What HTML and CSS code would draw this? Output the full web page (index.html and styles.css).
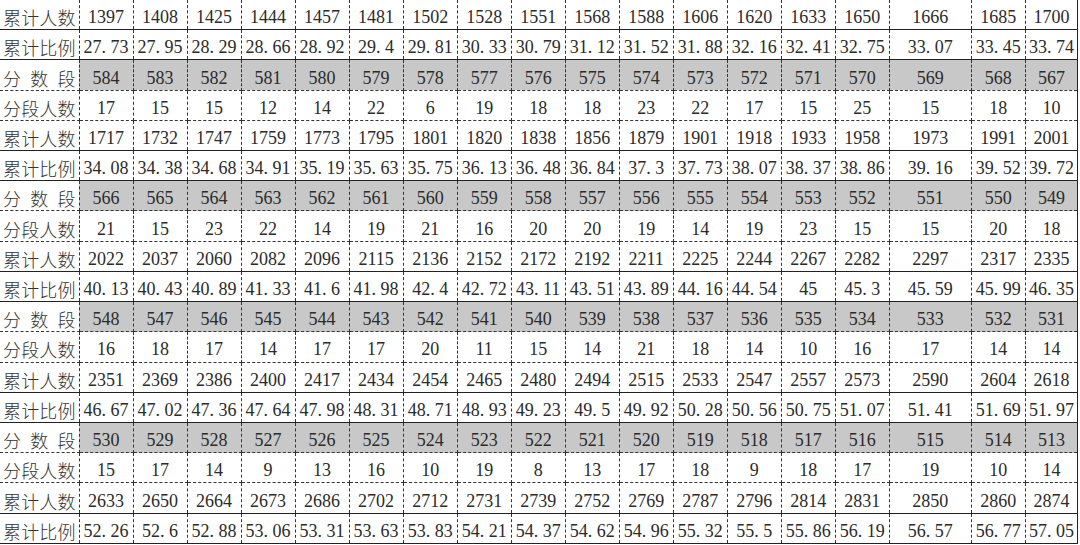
FILE: index.html
```html
<!DOCTYPE html>
<html lang="zh">
<head>
<meta charset="utf-8">
<title>分数段统计表</title>
<link rel="stylesheet" href="styles.css">
</head>
<body>
<table class="score-table">
<colgroup>
<col class="c-label">
<col class="c-num"><col class="c-num"><col class="c-num"><col class="c-num"><col class="c-num">
<col class="c-num"><col class="c-num"><col class="c-num"><col class="c-num"><col class="c-num">
<col class="c-num"><col class="c-num"><col class="c-num"><col class="c-num"><col class="c-num">
<col class="c-wide"><col class="c-num"><col class="c-last">
</colgroup>
<tbody>
<tr class="cum first"><th>累计人数</th><td>1397</td><td>1408</td><td>1425</td><td>1444</td><td>1457</td><td>1481</td><td>1502</td><td>1528</td><td>1551</td><td>1568</td><td>1588</td><td>1606</td><td>1620</td><td>1633</td><td>1650</td><td>1666</td><td>1685</td><td>1700</td></tr>
<tr class="pct"><th>累计比例</th><td>27<i>.</i>73</td><td>27<i>.</i>95</td><td>28<i>.</i>29</td><td>28<i>.</i>66</td><td>28<i>.</i>92</td><td>29<i>.</i>4</td><td>29<i>.</i>81</td><td>30<i>.</i>33</td><td>30<i>.</i>79</td><td>31<i>.</i>12</td><td>31<i>.</i>52</td><td>31<i>.</i>88</td><td>32<i>.</i>16</td><td>32<i>.</i>41</td><td>32<i>.</i>75</td><td>33<i>.</i>07</td><td>33<i>.</i>45</td><td>33<i>.</i>74</td></tr>
<tr class="seg"><th>分数段</th><td>584</td><td>583</td><td>582</td><td>581</td><td>580</td><td>579</td><td>578</td><td>577</td><td>576</td><td>575</td><td>574</td><td>573</td><td>572</td><td>571</td><td>570</td><td>569</td><td>568</td><td>567</td></tr>
<tr class="cnt"><th>分段人数</th><td>17</td><td>15</td><td>15</td><td>12</td><td>14</td><td>22</td><td>6</td><td>19</td><td>18</td><td>18</td><td>23</td><td>22</td><td>17</td><td>15</td><td>25</td><td>15</td><td>18</td><td>10</td></tr>
<tr class="cum"><th>累计人数</th><td>1717</td><td>1732</td><td>1747</td><td>1759</td><td>1773</td><td>1795</td><td>1801</td><td>1820</td><td>1838</td><td>1856</td><td>1879</td><td>1901</td><td>1918</td><td>1933</td><td>1958</td><td>1973</td><td>1991</td><td>2001</td></tr>
<tr class="pct"><th>累计比例</th><td>34<i>.</i>08</td><td>34<i>.</i>38</td><td>34<i>.</i>68</td><td>34<i>.</i>91</td><td>35<i>.</i>19</td><td>35<i>.</i>63</td><td>35<i>.</i>75</td><td>36<i>.</i>13</td><td>36<i>.</i>48</td><td>36<i>.</i>84</td><td>37<i>.</i>3</td><td>37<i>.</i>73</td><td>38<i>.</i>07</td><td>38<i>.</i>37</td><td>38<i>.</i>86</td><td>39<i>.</i>16</td><td>39<i>.</i>52</td><td>39<i>.</i>72</td></tr>
<tr class="seg"><th>分数段</th><td>566</td><td>565</td><td>564</td><td>563</td><td>562</td><td>561</td><td>560</td><td>559</td><td>558</td><td>557</td><td>556</td><td>555</td><td>554</td><td>553</td><td>552</td><td>551</td><td>550</td><td>549</td></tr>
<tr class="cnt"><th>分段人数</th><td>21</td><td>15</td><td>23</td><td>22</td><td>14</td><td>19</td><td>21</td><td>16</td><td>20</td><td>20</td><td>19</td><td>14</td><td>19</td><td>23</td><td>15</td><td>15</td><td>20</td><td>18</td></tr>
<tr class="cum"><th>累计人数</th><td>2022</td><td>2037</td><td>2060</td><td>2082</td><td>2096</td><td>2115</td><td>2136</td><td>2152</td><td>2172</td><td>2192</td><td>2211</td><td>2225</td><td>2244</td><td>2267</td><td>2282</td><td>2297</td><td>2317</td><td>2335</td></tr>
<tr class="pct"><th>累计比例</th><td>40<i>.</i>13</td><td>40<i>.</i>43</td><td>40<i>.</i>89</td><td>41<i>.</i>33</td><td>41<i>.</i>6</td><td>41<i>.</i>98</td><td>42<i>.</i>4</td><td>42<i>.</i>72</td><td>43<i>.</i>11</td><td>43<i>.</i>51</td><td>43<i>.</i>89</td><td>44<i>.</i>16</td><td>44<i>.</i>54</td><td>45</td><td>45<i>.</i>3</td><td>45<i>.</i>59</td><td>45<i>.</i>99</td><td>46<i>.</i>35</td></tr>
<tr class="seg"><th>分数段</th><td>548</td><td>547</td><td>546</td><td>545</td><td>544</td><td>543</td><td>542</td><td>541</td><td>540</td><td>539</td><td>538</td><td>537</td><td>536</td><td>535</td><td>534</td><td>533</td><td>532</td><td>531</td></tr>
<tr class="cnt"><th>分段人数</th><td>16</td><td>18</td><td>17</td><td>14</td><td>17</td><td>17</td><td>20</td><td>11</td><td>15</td><td>14</td><td>21</td><td>18</td><td>14</td><td>10</td><td>16</td><td>17</td><td>14</td><td>14</td></tr>
<tr class="cum"><th>累计人数</th><td>2351</td><td>2369</td><td>2386</td><td>2400</td><td>2417</td><td>2434</td><td>2454</td><td>2465</td><td>2480</td><td>2494</td><td>2515</td><td>2533</td><td>2547</td><td>2557</td><td>2573</td><td>2590</td><td>2604</td><td>2618</td></tr>
<tr class="pct"><th>累计比例</th><td>46<i>.</i>67</td><td>47<i>.</i>02</td><td>47<i>.</i>36</td><td>47<i>.</i>64</td><td>47<i>.</i>98</td><td>48<i>.</i>31</td><td>48<i>.</i>71</td><td>48<i>.</i>93</td><td>49<i>.</i>23</td><td>49<i>.</i>5</td><td>49<i>.</i>92</td><td>50<i>.</i>28</td><td>50<i>.</i>56</td><td>50<i>.</i>75</td><td>51<i>.</i>07</td><td>51<i>.</i>41</td><td>51<i>.</i>69</td><td>51<i>.</i>97</td></tr>
<tr class="seg"><th>分数段</th><td>530</td><td>529</td><td>528</td><td>527</td><td>526</td><td>525</td><td>524</td><td>523</td><td>522</td><td>521</td><td>520</td><td>519</td><td>518</td><td>517</td><td>516</td><td>515</td><td>514</td><td>513</td></tr>
<tr class="cnt"><th>分段人数</th><td>15</td><td>17</td><td>14</td><td>9</td><td>13</td><td>16</td><td>10</td><td>19</td><td>8</td><td>13</td><td>17</td><td>18</td><td>9</td><td>18</td><td>17</td><td>19</td><td>10</td><td>14</td></tr>
<tr class="cum"><th>累计人数</th><td>2633</td><td>2650</td><td>2664</td><td>2673</td><td>2686</td><td>2702</td><td>2712</td><td>2731</td><td>2739</td><td>2752</td><td>2769</td><td>2787</td><td>2796</td><td>2814</td><td>2831</td><td>2850</td><td>2860</td><td>2874</td></tr>
<tr class="pct"><th>累计比例</th><td>52<i>.</i>26</td><td>52<i>.</i>6</td><td>52<i>.</i>88</td><td>53<i>.</i>06</td><td>53<i>.</i>31</td><td>53<i>.</i>63</td><td>53<i>.</i>83</td><td>54<i>.</i>21</td><td>54<i>.</i>37</td><td>54<i>.</i>62</td><td>54<i>.</i>96</td><td>55<i>.</i>32</td><td>55<i>.</i>5</td><td>55<i>.</i>86</td><td>56<i>.</i>19</td><td>56<i>.</i>57</td><td>56<i>.</i>77</td><td>57<i>.</i>05</td></tr>
</tbody>
</table>
</body>
</html>
```

FILE: styles.css
```css
html, body {
  margin: 0;
  padding: 0;
  background: #ffffff;
}

.score-table {
  border-collapse: collapse;
  table-layout: fixed;
  width: 1078px;
  height: 544px;
  font-family: "Liberation Serif", "Noto Sans CJK SC", serif;
  font-size: 18px;
  color: #2b2b2b;
}

.c-label { width: 79px; }
.c-num { width: 54px; }
.c-wide { width: 82px; }
.c-last { width: 52px; }

.score-table th,
.score-table td {
  padding: 5px 0 0 0;
  line-height: 22px;
  vertical-align: middle;
  white-space: nowrap;
  border-left: 1px dashed #333;
  border-right: 1px dashed #333;
  border-top: 1px dashed #333;
  border-bottom: 1px dashed #333;
}

.score-table td {
  text-align: center;
}

.score-table td i {
  font-style: normal;
  display: inline-block;
  width: 0.5em;
  text-align: left;
}

.score-table th {
  font-family: "Noto Sans CJK SC", sans-serif;
  font-weight: 300;
  font-size: 18px;
  color: #333;
  padding-left: 3px;
  padding-right: 3px;
  text-align: justify;
  text-align-last: justify;
  border-left: none;
}

.score-table td:last-child {
  border-right: 1px solid #222;
}

.score-table tr.first th,
.score-table tr.first td {
  border-top: none;
}

.score-table tr.seg th,
.score-table tr.seg td {
  border-top: 1px solid #222;
}

.score-table tr.seg td {
  background: #c8c8c8;
}

.score-table tr.cum th,
.score-table tr.cum td,
.score-table tr.pct th,
.score-table tr.pct td {
  border-bottom: 1px solid #222;
}
```
